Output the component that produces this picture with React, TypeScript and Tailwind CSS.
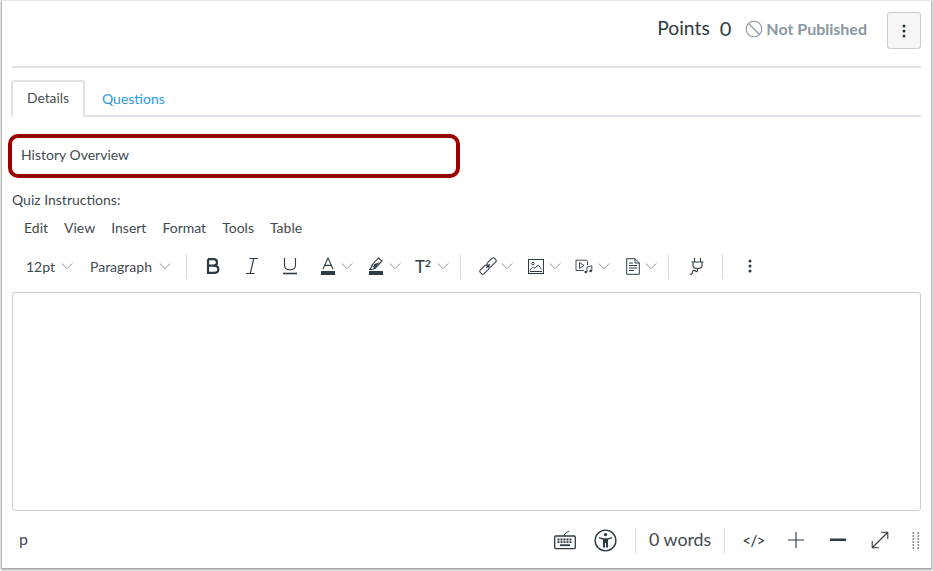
import { ReactNode } from 'react';

const ink = '#2d3b45';

function Chevron() {
  return (
    <svg width="12" height="12" viewBox="0 0 12 12" fill="none" stroke="#68757f" strokeWidth="0.8" className="shrink-0">
      <path d="M0.8 3.5 L6 8.7 L11.2 3.5" />
    </svg>
  );
}

function Divider({ className }: { className: string }) {
  return <div className={`w-px h-[25px] bg-[#d5dadf] shrink-0 ${className}`} />;
}

function Tool({ children, className }: { children: ReactNode; className: string }) {
  return <div className={`flex items-center shrink-0 ${className}`}>{children}</div>;
}

function Bold() {
  return (
    <svg width="14" height="16" viewBox="0 0 14 16" fill="none" stroke={ink} strokeWidth="2.2">
      <path d="M2 1.2 H7.5 C10 1.2 11 2.8 11 4.4 C11 6.2 9.8 7.6 7.5 7.6 H2 M7.5 7.6 C10.5 7.6 12.4 9 12.4 11.2 C12.4 13.4 10.8 14.8 8 14.8 H2 V1.2" />
    </svg>
  );
}

function Italic() {
  return (
    <svg width="14" height="18" viewBox="0 0 14 18" fill="none" stroke={ink} strokeWidth="1.1">
      <path d="M4.5 1.5 H13 M1 16.5 H9.5 M8.8 1.5 L5.2 16.5" />
    </svg>
  );
}

function Underline() {
  return (
    <svg width="16" height="18" viewBox="0 0 16 18" fill="none" stroke={ink} strokeWidth="1.1">
      <path d="M2.5 1 V8 C2.5 11 4.8 12.8 8 12.8 C11.2 12.8 13.5 11 13.5 8 V1" />
      <path d="M1 16.5 H15" strokeWidth="1.6" />
    </svg>
  );
}

function TextColor() {
  return (
    <svg width="16" height="18" viewBox="0 0 16 18" fill="none" stroke={ink} strokeWidth="1.1">
      <path d="M3 12 L8 1 L13 12 M4.6 8.4 H11.4" />
      <rect x="1" y="14" width="14" height="4" fill={ink} stroke="none" />
    </svg>
  );
}

function Highlight() {
  return (
    <svg width="16" height="18" viewBox="0 0 16 18" fill="none" stroke={ink} strokeWidth="1.1">
      <path d="M10.5 1 L14 4 L7 11.5 L3.8 12.5 L1.8 12.5 L3.6 9.8 L4 8 Z M4 8 L7 11.5" />
      <path d="M5.5 7.5 L11.5 5 L7 11 Z" fill={ink} stroke="none" />
      <rect x="1" y="14" width="14" height="4" fill={ink} stroke="none" />
    </svg>
  );
}

function LinkIcon() {
  return (
    <svg width="18" height="18" viewBox="0 0 18 18" fill="none" stroke={ink} strokeWidth="1">
      <rect x="-5" y="-2.6" width="10" height="5.2" rx="2" transform="translate(12.6 5.4) rotate(-45)" />
      <rect x="-5" y="-2.6" width="10" height="5.2" rx="2" transform="translate(5.4 12.6) rotate(-45)" />
      <path d="M7.2 10.8 L10.8 7.2" strokeWidth="1.4" />
    </svg>
  );
}

function ImageIcon() {
  return (
    <svg width="16" height="15" viewBox="0 0 16 15" fill="none" stroke={ink} strokeWidth="1">
      <rect x="0.5" y="0.5" width="15" height="14" />
      <circle cx="5" cy="4.6" r="1.3" />
      <path d="M2 11.5 C3.5 8.5 5 7.8 6.5 9 C7.5 9.8 8.5 6.5 10 6.5 C11.5 6.5 12.5 9.5 14 10.5 M2 12.5 H14" />
    </svg>
  );
}

function MediaIcon() {
  return (
    <svg width="18" height="15" viewBox="0 0 18 15" fill="none" stroke={ink} strokeWidth="0.9">
      <path d="M1 1.2 H11.5 L12.5 2.2 V6 M9 11.5 H1 V1.2" />
      <path d="M4.5 3.5 L9 6.5 L4.5 9.5 Z" />
      <path d="M12 13 V8 L16.8 6.8 V12" />
      <circle cx="10.8" cy="13" r="1.3" fill={ink} stroke="none" />
      <circle cx="15.6" cy="12" r="1.3" fill={ink} stroke="none" />
    </svg>
  );
}

function DocIcon() {
  return (
    <svg width="14" height="17" viewBox="0 0 14 17" fill="none" stroke={ink} strokeWidth="1">
      <path d="M0.7 0.7 H9 L13.3 5 V16.3 H0.7 Z M9 0.7 V5 H13.3" />
      <path d="M3 5 H7 M3 7.5 H11 M3 10 H11 M3 12.5 H8" />
    </svg>
  );
}

function PlugIcon() {
  return (
    <svg width="16" height="19" viewBox="0 0 16 19" fill="none" stroke={ink} strokeWidth="1.1">
      <path d="M5.5 1 V5 M11.5 1 V5 M2.5 5 H14.5 M4 5 V8.5 C4 10.5 6 11.5 8.5 11.5 C11 11.5 13 10.5 13 8.5 V5 M8.5 11.5 V14" />
      <path d="M8.5 13 C8.5 15 7.5 15 6.5 14 C5.5 13 3.5 13 3.5 15 C3.5 16.5 2.5 17.5 0.8 17.5" />
    </svg>
  );
}

function Dots({ color = ink }: { color?: string }) {
  return (
    <svg width="4" height="14" viewBox="0 0 4 14" fill={color}>
      <circle cx="2" cy="2" r="1.5" />
      <circle cx="2" cy="7" r="1.5" />
      <circle cx="2" cy="12" r="1.5" />
    </svg>
  );
}

function Keyboard() {
  return (
    <svg width="22" height="20" viewBox="0 0 22 20" fill="none" stroke={ink} strokeWidth="1.3">
      <rect x="0.7" y="6" width="20.6" height="12.6" rx="1" />
      <path d="M10.5 6 V4 L15 1" strokeWidth="1" />
      <path d="M3.5 9.5 H18.5 M3.5 12.2 H18.5" strokeWidth="1.8" strokeDasharray="2 1" />
      <path d="M6 15.2 H16" strokeWidth="1.8" />
    </svg>
  );
}

function Accessibility() {
  return (
    <svg width="23" height="23" viewBox="0 0 23 23" fill="none">
      <circle cx="11.5" cy="11.5" r="10.4" stroke={ink} strokeWidth="1.4" />
      <circle cx="11.5" cy="5.6" r="1.7" fill={ink} />
      <path d="M5 8 L9 9.2 H14 L18 8 L18.2 9.3 L14 10.8 V18.5 H12 V14 H11 V18.5 H9 V10.8 L4.8 9.3 Z" fill={ink} />
    </svg>
  );
}

function Expand() {
  return (
    <svg width="18" height="18" viewBox="0 0 18 18" fill="none" stroke={ink} strokeWidth="1.1">
      <path d="M1.5 16.5 L16.5 1.5 M10 1.2 H16.8 V8 M1.2 10 V16.8 H8" />
    </svg>
  );
}

function Grip() {
  return (
    <svg width="8" height="17" viewBox="0 0 8 17" fill="#6b7780">
      {[1, 4, 7, 10, 13, 16].map((y) => (
        <g key={y}>
          <rect x="0.5" y={y - 0.8} width="1.6" height="1.6" />
          <rect x="5.5" y={y - 0.8} width="1.6" height="1.6" />
        </g>
      ))}
    </svg>
  );
}

export default function App() {
  return (
    <div className="w-[933px] h-[571px] bg-white font-['Lato','Noto_Sans',sans-serif] text-[#2d3b45] overflow-hidden">
      <div className="w-[931px] h-[569px] ml-px border border-t-[#e6e6e6] border-x-[#b5b5b5] border-b-[#a8a8a8] shadow-[0_1px_2px_rgba(0,0,0,0.35)] px-[10px]">
        {/* top bar */}
        <div className="h-[67px] border-b-2 border-[#dfe3e7] flex items-start justify-end">
          <div className="flex items-center mt-[11px]">
            <div className="flex items-center mb-[5px]">
              <span className="text-[19.3px] leading-[30px]">Points</span>
              <span className="text-[20px] leading-[30px] ml-[10px]">0</span>
              <svg width="18" height="18" viewBox="0 0 18 18" fill="none" stroke="#8b969e" strokeWidth="1.1" className="ml-[14px] mt-[1px]">
                <circle cx="9" cy="9" r="7.8" />
                <path d="M3.5 3.5 L14.5 14.5" />
              </svg>
              <span className="text-[16px] leading-[30px] font-bold text-[#8b969e] ml-[3px] mt-[2px]">Not Published</span>
            </div>
            <div className="w-[34px] h-[37px] ml-[20px] bg-[#f5f5f5] border border-[#c7cdd1] rounded-[3px] flex items-center justify-center">
              <Dots />
            </div>
          </div>
        </div>

        {/* tabs */}
        <div className="h-[37px] mt-[12px] border-b-2 border-[#dfe3e7] flex items-start">
          <div className="w-[74px] h-[37px] -ml-px pb-[2px] bg-white border-2 border-b-0 border-[#dfe3e7] rounded-t-[3px] flex items-center justify-center text-[13.8px] text-[#4a4f54]">
            Details
          </div>
          <div className="h-[35px] pt-px flex items-center ml-[17px] text-[14px] text-[#2b9ae8]">Questions</div>
        </div>

        {/* title input */}
        <div className="w-[452px] h-[44px] mt-[17px] -ml-[4px] pb-[3px] border-[4px] border-[#990000] rounded-[10px] bg-white flex items-center pl-[9px] text-[14px] text-[#3f4a52]">
          History Overview
        </div>

        <div className="text-[14px] leading-[20px] mt-[12px] text-[#3f4a52]">Quiz Instructions:</div>

        {/* menu bar */}
        <div className="flex items-center gap-[16px] pl-[12px] mt-[7px] h-[20px] text-[14px] text-[#3f4a52]">
          <span>Edit</span>
          <span>View</span>
          <span>Insert</span>
          <span>Format</span>
          <span>Tools</span>
          <span>Table</span>
        </div>

        {/* toolbar */}
        <div className="flex items-center h-[26px] mt-[16px] text-[14px] text-[#3f4a52]">
          <Tool className="ml-[14px] w-[47px] justify-between"><span>12pt</span><Chevron /></Tool>
          <Tool className="ml-[17px] w-[81px] justify-between"><span>Paragraph</span><Chevron /></Tool>
          <Divider className="ml-[15px]" />
          <Tool className="ml-[19px]"><Bold /></Tool>
          <Tool className="ml-[25px]"><Italic /></Tool>
          <Tool className="ml-[23px]"><Underline /></Tool>
          <Tool className="ml-[22px] gap-[5px]"><TextColor /><Chevron /></Tool>
          <Tool className="ml-[15px] gap-[5px]"><Highlight /><Chevron /></Tool>
          <Tool className="ml-[14px] gap-[4px]">
            <span className="w-[18px] text-[17px] leading-none text-[#2d3b45]">T<span className="text-[10px] font-bold align-[6px]">2</span></span>
            <Chevron />
          </Tool>
          <Divider className="ml-[11px]" />
          <Tool className="ml-[18px] gap-[4px]"><LinkIcon /><Chevron /></Tool>
          <Tool className="ml-[15px] gap-[5px]"><ImageIcon /><Chevron /></Tool>
          <Tool className="ml-[14px] gap-[5px]"><MediaIcon /><Chevron /></Tool>
          <Tool className="ml-[16px] gap-[5px]"><DocIcon /><Chevron /></Tool>
          <Divider className="ml-[11px]" />
          <Tool className="ml-[20px]"><PlugIcon /></Tool>
          <Divider className="ml-[17px]" />
          <Tool className="ml-[25px]"><Dots /></Tool>
        </div>

        {/* editor */}
        <div className="h-[219px] mt-[13px] bg-white border border-[#c7cdd1] rounded-[3px]" />

        {/* status bar */}
        <div className="flex items-center h-[26px] mt-[16px] pl-[7px]">
          <span className="text-[16px] text-[#3f4a52] mb-[2px]">p</span>
          <div className="flex-1" />
          <Keyboard />
          <div className="ml-[18px]"><Accessibility /></div>
          <Divider className="ml-[18px]" />
          <span className="ml-[13px] text-[17.8px] leading-none text-[#3f4a52]">0 words</span>
          <Divider className="ml-[13px]" />
          <span className="ml-[17px] text-[15px] leading-none font-medium tracking-[-0.5px]">&lt;/&gt;</span>
          <svg width="18" height="18" viewBox="0 0 18 18" stroke={ink} strokeWidth="1.1" className="ml-[22px]">
            <path d="M9 1 V17 M1 9 H17" />
          </svg>
          <svg width="18" height="4" viewBox="0 0 18 4" fill={ink} className="ml-[24px]">
            <rect x="1" y="0.5" width="16" height="2.5" />
          </svg>
          <div className="ml-[24px]"><Expand /></div>
          <div className="ml-[23px]"><Grip /></div>
          <div className="w-px" />
        </div>
      </div>
    </div>
  );
}
